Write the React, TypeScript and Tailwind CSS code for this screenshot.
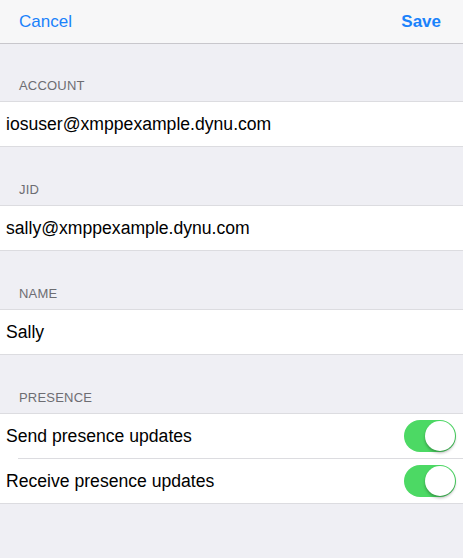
import React, { useState } from 'react';

const font = { fontFamily: '"Liberation Sans", Arial, sans-serif' };

function SectionHeader({ title, first }: { title: string; first?: boolean }) {
  return (
    <div className={`${first ? 'h-[57px]' : 'h-[58px]'} flex items-end px-[19px] pb-[7px]`}>
      <span className="text-[13px] leading-[16px] text-[#6d6d72] tracking-[0.2px]">{title}</span>
    </div>
  );
}

function TextRow({ value }: { value: string }) {
  return (
    <div className="bg-white border-y border-[#dcdce0] h-[46px] flex items-center px-[6px]">
      <span className="text-[17.6px] text-black">{value}</span>
    </div>
  );
}

function Toggle({ on, onToggle }: { on: boolean; onToggle: () => void }) {
  return (
    <button
      onClick={onToggle}
      className={`relative w-[52px] h-[32px] rounded-full transition-colors ${on ? 'bg-[#4cd964]' : 'bg-[#e5e5ea]'}`}
    >
      <span
        className={`absolute top-[1px] w-[30px] h-[30px] rounded-full bg-white shadow-[0_2px_3px_rgba(0,0,0,0.3)] transition-all ${on ? 'left-[21px]' : 'left-[1px]'}`}
      />
    </button>
  );
}

export default function App() {
  const [send, setSend] = useState(true);
  const [receive, setReceive] = useState(true);

  return (
    <div className="w-[463px] h-[558px] bg-[#efeff4] overflow-hidden" style={font}>
      {/* nav bar */}
      <div className="h-[44px] bg-[#f7f7f8] border-b border-[#c8c7cc] flex items-center justify-between px-[19px]">
        <button className="text-[17px] text-[#1a82fb]">Cancel</button>
        <button className="text-[17px] font-bold text-[#1a82fb] mr-[3px]">Save</button>
      </div>

      <SectionHeader title="ACCOUNT" first />
      <TextRow value="iosuser@xmppexample.dynu.com" />

      <SectionHeader title="JID" />
      <TextRow value="sally@xmppexample.dynu.com" />

      <SectionHeader title="NAME" />
      <TextRow value="Sally" />

      <SectionHeader title="PRESENCE" />
      <div className="bg-white border-y border-[#dcdce0]">
        <div className="h-[44px] flex items-center justify-between pl-[6px] pr-[7px]">
          <span className="text-[17.6px] text-black">Send presence updates</span>
          <Toggle on={send} onToggle={() => setSend(!send)} />
        </div>
        <div className="ml-[18px] border-t border-[#dcdce0]" />
        <div className="h-[44px] flex items-center justify-between pl-[6px] pr-[7px]">
          <span className="text-[17.6px] text-black">Receive presence updates</span>
          <Toggle on={receive} onToggle={() => setReceive(!receive)} />
        </div>
      </div>
    </div>
  );
}
